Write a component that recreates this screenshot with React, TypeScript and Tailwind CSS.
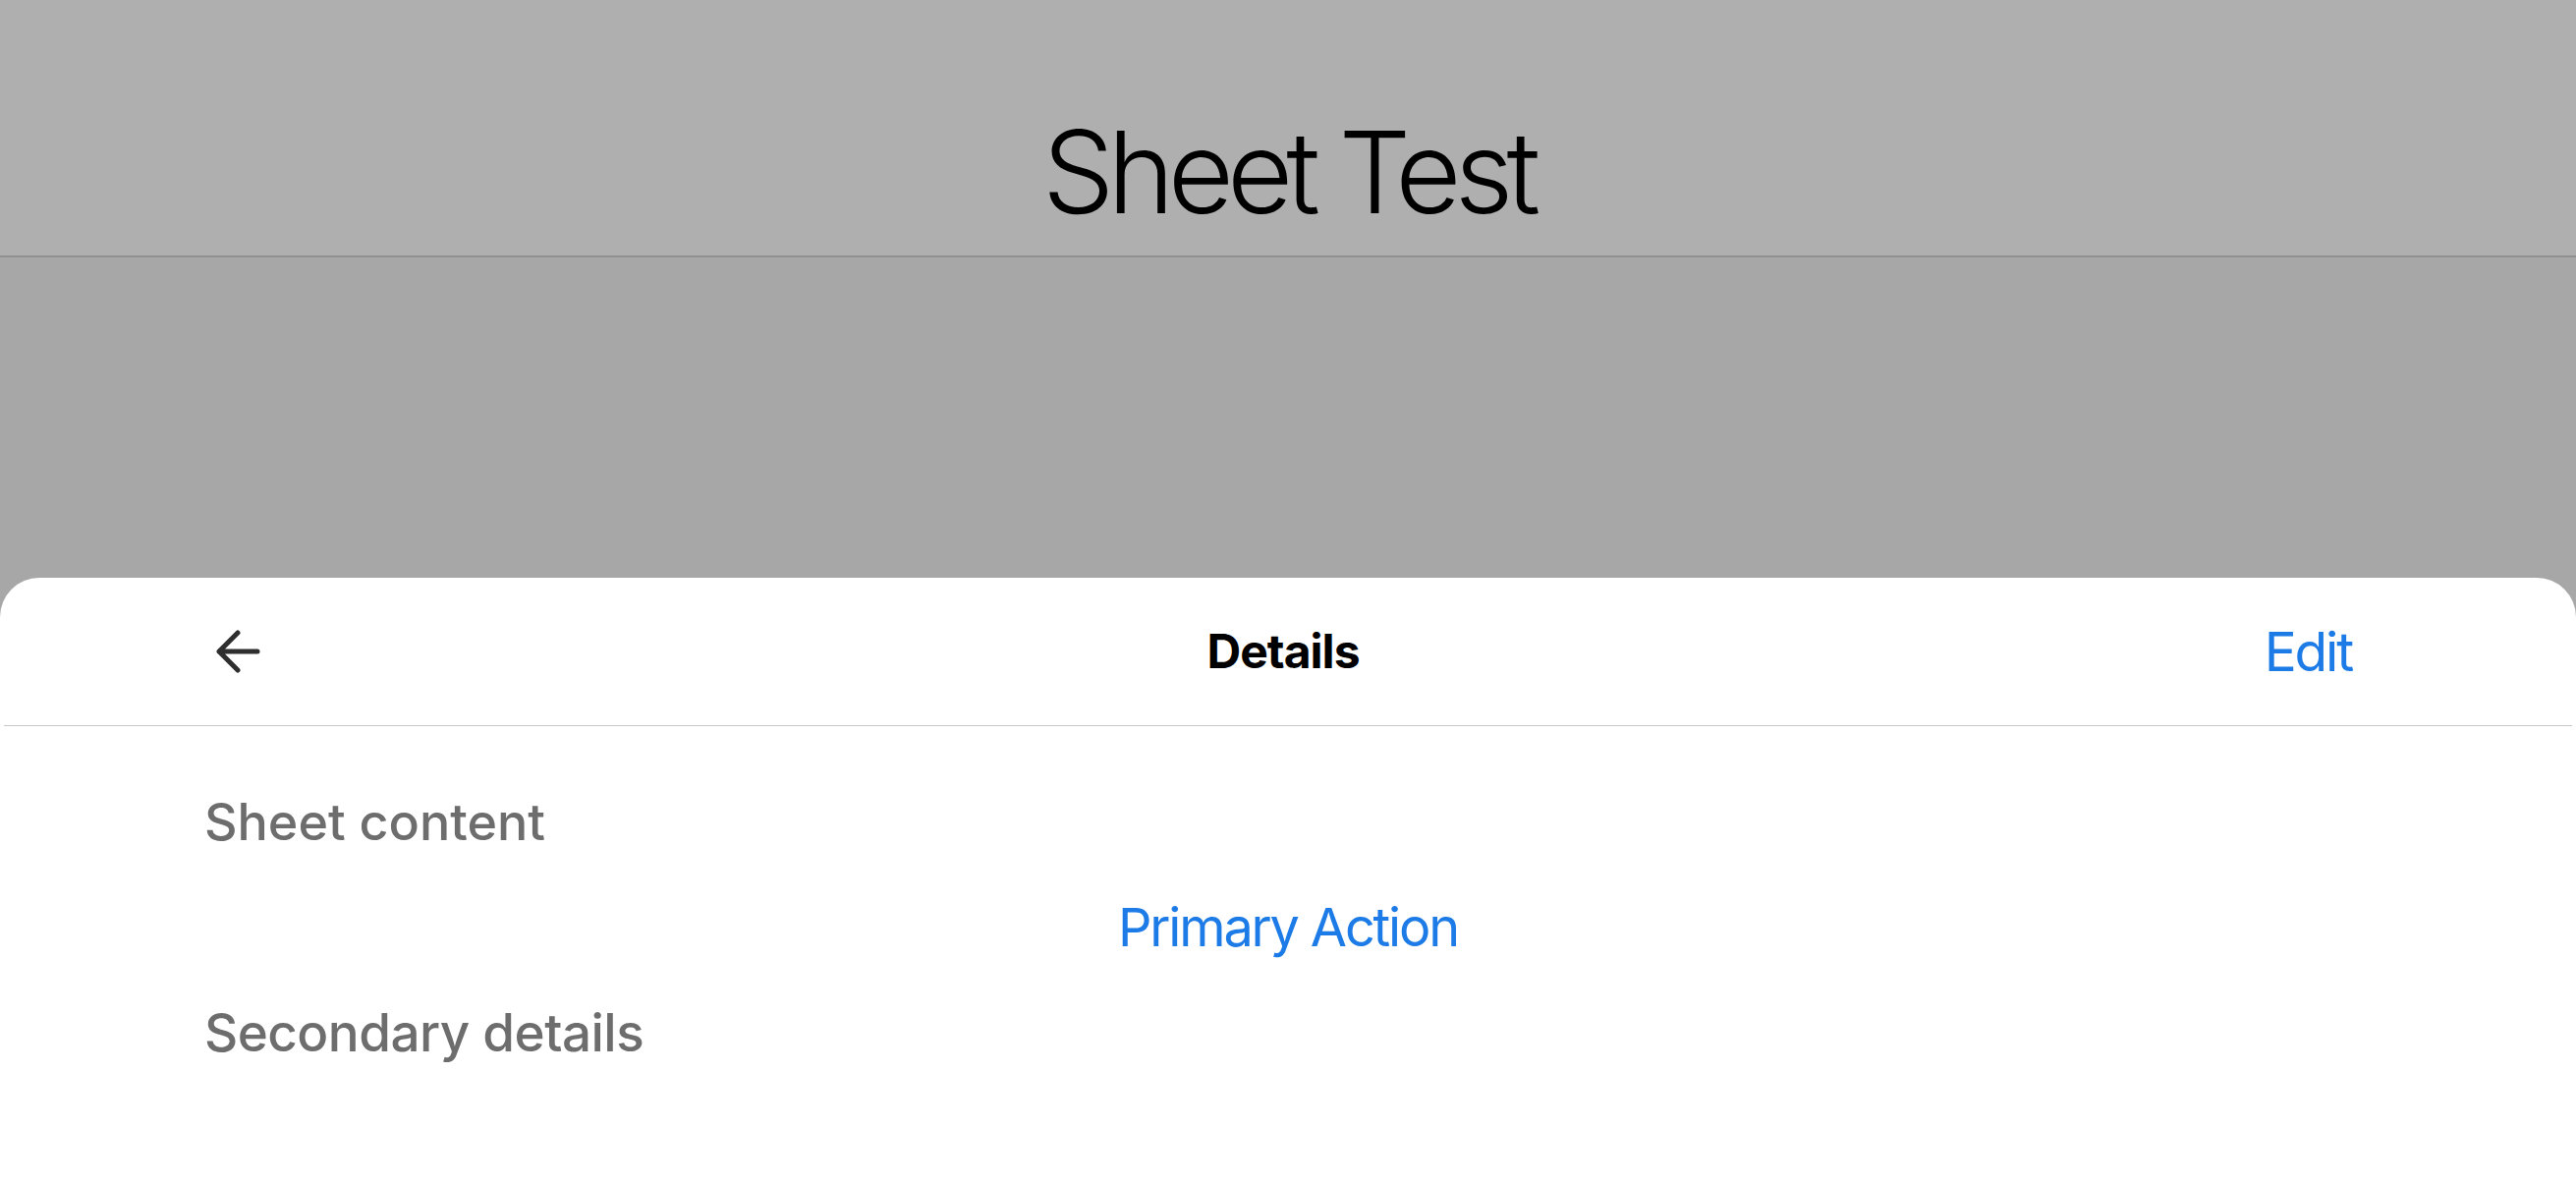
import React from 'react';

const BackArrow = () => (
  <svg width="48" height="48" viewBox="0 0 48 48" fill="none" className="text-[#2e2e2e]">
    <path d="M44 24H5M24 5L5 24l19 19" stroke="currentColor" strokeWidth="5" strokeLinecap="round" strokeLinejoin="round" />
  </svg>
);

export default function App() {
  return (
    <div className="h-[1206px] w-full flex flex-col bg-[#a7a7a7] overflow-hidden font-['Inter',sans-serif]">
      {/* Top bar */}
      <header className="h-[262px] shrink-0 bg-[#afafaf] border-b-2 border-[#909090] flex justify-center">
        <h1 className="pt-[117px] text-[116px] leading-none font-light text-black tracking-[-0.06em]">Sheet Test</h1>
      </header>

      <div className="flex-1" />

      {/* Sheet */}
      <section className="h-[618px] shrink-0 bg-white rounded-t-[40px] flex flex-col">
        <div className="h-[151px] shrink-0 flex items-center justify-between pl-[214px] pr-[224px] border-b border-[#c8c8c8] mx-[4px]">
          <button className="w-[120px] flex items-center">
            <BackArrow />
          </button>
          <h2 className="text-[48px] leading-none font-bold text-black tracking-[-0.02em]">Details</h2>
          <button className="w-[120px] text-right text-[55px] leading-none text-[#1c7be6] tracking-[-0.04em]">Edit</button>
        </div>

        <div className="flex flex-col pt-[72px] px-[208px]">
          <p className="text-[52px] leading-none font-medium text-[#6d6d6d]">Sheet content</p>
          <button className="mt-[54px] self-center text-[54px] leading-none text-[#1c7be6] tracking-[-0.04em]">Primary Action</button>
          <p className="mt-[54px] text-[53px] leading-none font-medium text-[#6d6d6d] tracking-[-0.01em]">Secondary details</p>
        </div>
      </section>
    </div>
  );
}
